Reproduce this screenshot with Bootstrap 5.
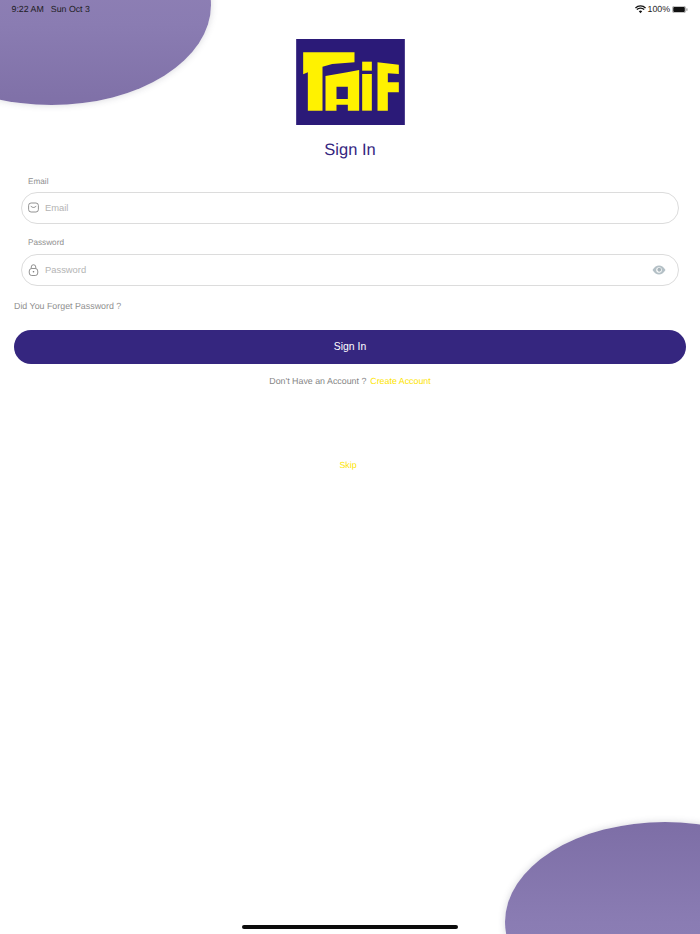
<!doctype html>
<html lang="en">
<head>
<meta charset="utf-8">
<title>Sign In</title>
<link href="https://cdn.jsdelivr.net/npm/bootstrap@5.3.0/dist/css/bootstrap.min.css" rel="stylesheet">
<style>
html,body{height:100%}
body{font-family:"Liberation Sans",Arial,sans-serif;background:#fff;color:#8e8e8e;overflow:hidden;text-rendering:geometricPrecision}
.screen{position:relative;width:700px;height:934px;overflow:hidden}
.blob{position:absolute;border-radius:50%;box-shadow:0 0 7px rgba(70,70,90,.22)}
.blob-top{left:-108px;top:-95px;width:319px;height:200px;background:linear-gradient(180deg,#9485b9 0%,#8a7cb2 60%,#7f70a7 100%)}
.blob-bottom{left:505px;top:822px;width:320px;height:200px;background:linear-gradient(180deg,#7d6ea6 0%,#8a7cb3 50%,#9184b9 100%)}
.status{position:relative;height:17px;padding:3px 12px 0 11.5px;font-size:8.8px;line-height:13px;color:#1c1c22}
.status .sep{margin-left:7px}
.content{position:relative;padding:0 14px}
.logo-wrap{height:86px;margin-top:22px}
.logo-wrap svg{display:block;width:109px;height:86px}
.title{font-size:16.5px;line-height:21px;color:#35267f;margin:14.5px 0 0;font-weight:400}
.field-wrap{padding:0 7px}
.f-label{font-size:8.2px;line-height:11px;color:#8f8f8f;padding-left:7px;margin:0}
.first-label{margin-top:15px}
.next-label{margin-top:13px}
.pill{height:32px;border:1px solid #dcdcdc;border-radius:16px;margin-top:6px;padding:0 12px 0 6px;background:#fff}
.first-pill{margin-top:5px}
.pill .form-control{border:0;padding:0 0 0 6px;font-size:9.4px;color:#555;background:transparent;box-shadow:none;height:30px}
.pill .form-control::placeholder{color:#b4b4b4;opacity:1}
.forgot{font-size:8.85px;line-height:12px;color:#8f8f8f;margin-top:14px}
.go{display:block;width:100%;height:34px;border-radius:17px;background:#35267f;border:0;color:#fff;font-size:10.4px;margin-top:18px;padding:1px 0 0}
.go:hover,.go:active{background:#35267f!important;color:#fff!important}
.account{font-size:8.85px;line-height:12px;margin-top:11px;color:#858585}
.yel{color:#fde400;text-decoration:none}
.gap-link{margin-left:1.5px}
.skip{font-size:8.85px;line-height:12px;margin-top:72px;padding-right:4px}
.home-bar{position:absolute;left:242px;top:925px;width:216px;height:3.5px;border-radius:2px;background:#0b0b0b}
.st-wifi{margin-right:2px}
.st-batt{margin-left:2px}
</style>
</head>
<body>
<div class="screen">
  <div class="blob blob-top"></div>
  <div class="blob blob-bottom"></div>

  <div class="status d-flex justify-content-between align-items-start">
    <div>9:22 AM<span class="sep">Sun Oct 3</span></div>
    <div class="d-flex align-items-center">
      <svg width="11" height="9" viewBox="0 0 22 16" class="st-wifi" aria-hidden="true"><path d="M11 15.5 7.6 11.7a5 5 0 0 1 6.8 0Z" fill="#111"/><path d="M3.6 8.2a11 11 0 0 1 14.8 0" fill="none" stroke="#111" stroke-width="2.8"/><path d="M.9 4.8a15 15 0 0 1 20.2 0" fill="none" stroke="#111" stroke-width="2.6"/></svg>
      <span>100%</span>
      <svg width="16" height="7" viewBox="0 0 36 16" class="st-batt" aria-hidden="true"><rect x=".7" y=".7" width="30" height="14.6" rx="3.5" fill="none" stroke="#777" stroke-width="1.2"/><rect x="2.5" y="2.5" width="26.5" height="11" rx="2" fill="#111"/><rect x="32.5" y="5" width="2.5" height="6" rx="1" fill="#888"/></svg>
    </div>
  </div>

  <div class="content">
    <div class="logo-wrap d-flex justify-content-center">
      <svg viewBox="47 25 326 258" role="img" aria-label="Taif logo">
        <rect x="47" y="25" width="326" height="258" fill="#2b1a78"/>
        <g fill="#fff200">
          <path d="M68 65H222V95L155 100 126 108V240H82V125L68 131Z"/>
          <path fill-rule="evenodd" d="M135 136 200 125 236 118V240H202V222H168V240H135ZM168 168V205H202V168Z"/>
          <rect x="245" y="93" width="29" height="27"/>
          <rect x="245" y="130" width="29" height="110"/>
          <path d="M291 95 355 102V130L322 128V155H355V185H322V240H291Z"/>
        </g>
      </svg>
    </div>

    <h1 class="title text-center">Sign In</h1>

    <form>
      <div class="field-wrap">
        <p class="f-label first-label">Email</p>
        <div class="pill first-pill d-flex align-items-center">
          <svg width="11" height="11" viewBox="0 0 22 22" class="flex-shrink-0" aria-hidden="true"><rect x="1.2" y="2" width="19.6" height="18" rx="5" fill="none" stroke="#777" stroke-width="1.6"/><path d="M6 8.5c2 3.4 8 3.4 10 0" fill="none" stroke="#777" stroke-width="1.7" stroke-linecap="round"/></svg>
          <input class="form-control" type="email" placeholder="Email" aria-label="Email">
        </div>
        <p class="f-label next-label">Password</p>
        <div class="pill d-flex align-items-center">
          <svg width="11" height="12" viewBox="0 0 22 24" class="flex-shrink-0" aria-hidden="true"><rect x="2.5" y="9" width="17" height="14" rx="5" fill="none" stroke="#777" stroke-width="1.6"/><path d="M6.5 9V6a4.5 4.5 0 0 1 9 0v3" fill="none" stroke="#777" stroke-width="1.6"/><circle cx="11" cy="15.5" r="1.6" fill="#777"/></svg>
          <input class="form-control" type="password" placeholder="Password" aria-label="Password">
          <svg width="14" height="10" viewBox="0 0 28 20" class="flex-shrink-0 ms-2" aria-hidden="true"><path d="M1 10C5 3.5 9 1 14 1s9 2.5 13 9c-4 6.5-8 9-13 9S5 16.5 1 10Z" fill="#b4c0c6"/><circle cx="14" cy="10" r="5.5" fill="#fff"/><circle cx="14.5" cy="9.5" r="3.8" fill="#a7b4ba"/></svg>
        </div>
      </div>
      <div class="forgot">Did You Forget Password ?</div>
      <button type="button" class="btn go">Sign In</button>
    </form>

    <div class="account text-center">Don't Have an Account ? <a href="#" class="yel gap-link">Create Account</a></div>
    <div class="skip text-center"><a href="#" class="yel">Skip</a></div>
  </div>

  <div class="home-bar"></div>
</div>
<script src="https://cdn.jsdelivr.net/npm/bootstrap@5.3.0/dist/js/bootstrap.bundle.min.js"></script>
</body>
</html>
